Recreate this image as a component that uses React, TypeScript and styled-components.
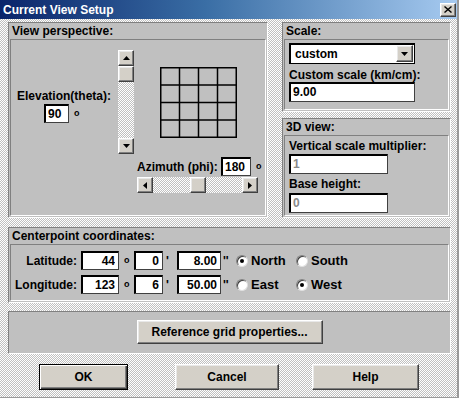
import * as React from 'react';
import styled, { createGlobalStyle, css } from 'styled-components';

const GlobalStyle = createGlobalStyle`
	html, body {
		margin: 0;
		padding: 0;
		background: #fff;
	}
	body {
		font-family: "Liberation Sans", Arial, sans-serif;
		font-size: 12px;
		font-weight: bold;
		color: #000;
	}
`;

const dither = css`
	background-color: #fff;
	background-image: repeating-conic-gradient(#c0c0c0 0 25%, #ffffff 0 50%);
	background-size: 2px 2px;
`;

const raised = css`
	background: #d4d0c8;
	border: 1px solid;
	border-color: #fff #404040 #404040 #fff;
	box-shadow: inset -1px -1px #808080, inset 1px 1px #e8e8e8;
`;

const sunken = css`
	border: 1px solid;
	border-color: #808080 #fff #fff #808080;
`;

const Window = styled.div`
	width: 459px;
	height: 398px;
	box-sizing: border-box;
	border-right: 2px solid #9a9a9a;
	border-bottom: 1px solid #9a9a9a;
	display: flex;
	flex-direction: column;
	${dither};
`;

const TitleBar = styled.div`
	height: 19px;
	flex: none;
	display: flex;
	align-items: center;
	justify-content: space-between;
	padding: 0 1px 0 3px;
	background: linear-gradient(90deg, #0a246a 0%, #3a6ea5 45%, #a6caf0 100%);
	color: #fff;
	font-size: 12px;
`;

const CloseButton = styled.div`
	width: 16px;
	height: 14px;
	box-sizing: border-box;
	display: flex;
	align-items: center;
	justify-content: center;
	${raised};
`;

const Body = styled.div`
	flex: 1;
	padding: 3px 6px 0 8px;
	display: flex;
	flex-direction: column;
`;

const TopRow = styled.div`
	display: flex;
	gap: 14px;
	height: 196px;
`;

const RightColumn = styled.div`
	width: 169px;
	display: flex;
	flex-direction: column;
	gap: 6px;
`;

const Panel = styled.section<{ $w?: number; $h?: number; $grow?: boolean }>`
	box-sizing: border-box;
	width: ${p => (p.$w ? `${p.$w}px` : 'auto')};
	height: ${p => (p.$h ? `${p.$h}px` : 'auto')};
	flex: ${p => (p.$grow ? 1 : 'none')};
	background: #c0c0c0;
	display: flex;
	flex-direction: column;
	${sunken};
`;

const PanelHeader = styled.div`
	height: 16px;
	line-height: 16px;
	padding-left: 3px;
	flex: none;
`;

const PanelBody = styled.div`
	flex: 1;
	margin: 0 1px 1px;
	display: flex;
	${sunken};
`;

const StackBody = styled(PanelBody)`
	flex-direction: column;
	padding-left: 4px;
`;

const Label = styled.div<{ $mt?: number }>`
	line-height: 14px;
	height: 14px;
	margin-top: ${p => p.$mt || 0}px;
	white-space: nowrap;
`;

const Field = styled.input<{ $w: number; $h?: number; $align?: string; $mt?: number; $dim?: boolean }>`
	box-sizing: border-box;
	width: ${p => p.$w}px;
	height: ${p => p.$h || 19}px;
	margin: ${p => p.$mt || 0}px 0 0 0;
	padding: 0 3px;
	border: 1px solid #000;
	border-right-color: #404040;
	border-bottom-color: #404040;
	box-shadow: inset 1px 1px #000;
	background: #fff;
	font-family: "Liberation Sans", Arial, sans-serif;
	font-size: 12px;
	font-weight: bold;
	color: ${p => (p.$dim ? '#8a8a8a' : '#000')};
	text-align: ${p => p.$align || 'left'};
	outline: none;
`;

const Unit = styled.span<{ $pl?: number; $small?: boolean }>`
	padding-left: ${p => p.$pl || 0}px;
	font-size: ${p => (p.$small ? 9 : 12)}px;
	line-height: 1;
	align-self: center;
`;

/* view perspective */

const LeftCol = styled.div`
	width: 107px;
	padding: 49px 0 0 6px;
	box-sizing: border-box;
	display: flex;
	flex-direction: column;
`;

const InlineRow = styled.div<{ $ml?: number; $mt?: number }>`
	display: flex;
	align-items: center;
	margin-left: ${p => p.$ml || 0}px;
	margin-top: ${p => p.$mt || 0}px;
`;

const VScroll = styled.div`
	width: 16px;
	height: 104px;
	margin-top: 10px;
	display: flex;
	flex-direction: column;
	${dither};
`;

const HScroll = styled.div`
	width: 121px;
	height: 16px;
	margin: 1px 0 0 3px;
	display: flex;
	${dither};
`;

const ScrollBtn = styled.div`
	width: 16px;
	height: 16px;
	box-sizing: border-box;
	flex: none;
	display: flex;
	align-items: center;
	justify-content: center;
	${raised};
`;

const Track = styled.div<{ $size?: number }>`
	flex: ${p => (p.$size ? `0 0 ${p.$size}px` : 1)};
`;

const ViewArea = styled.div`
	padding-top: 27px;
	display: flex;
	flex-direction: column;
`;

const GridBox = styled.svg`
	margin-left: 26px;
	display: block;
`;

const FixedLabel = styled.span<{ $w: number }>`
	width: ${p => p.$w}px;
	white-space: nowrap;
`;

/* scale */

const Select = styled.div`
	box-sizing: border-box;
	width: 126px;
	height: 21px;
	margin-top: 3px;
	background: #fff;
	border: 1px solid #000;
	box-shadow: inset 1px 1px #000;
	display: flex;
	align-items: center;
	justify-content: space-between;
	padding: 0 1px 0 5px;
`;

const DropBtn = styled(ScrollBtn)`
	width: 17px;
	height: 17px;
`;

/* coordinates */

const CoordGrid = styled.div`
	display: grid;
	grid-template-columns: 70px 38px 15px 29px 14px 44px 15px 60px auto;
	grid-auto-rows: 19px;
	row-gap: 5px;
	padding-top: 6px;
	align-items: center;
`;

const RowLabel = styled.span`
	text-align: right;
	padding-right: 4px;
`;

const Radio = styled.label`
	display: flex;
	align-items: center;
	gap: 3px;
	font-size: 13px;
`;

const RadioDot = styled.span<{ $on?: boolean }>`
	width: 12px;
	height: 12px;
	box-sizing: border-box;
	border-radius: 50%;
	background: #fff;
	border: 1px solid;
	border-color: #808080 #e0e0e0 #e0e0e0 #808080;
	box-shadow: inset 1px 1px #404040;
	display: flex;
	align-items: center;
	justify-content: center;

	&::after {
		content: '';
		width: 4px;
		height: 4px;
		border-radius: 50%;
		background: #000;
		display: ${p => (p.$on ? 'block' : 'none')};
	}
`;

/* bottom */

const CenterBody = styled.div`
	flex: 1;
	display: flex;
	justify-content: center;
	padding-top: 8px;
`;

const Button = styled.button<{ $w: number; $ml?: number; $default?: boolean }>`
	box-sizing: border-box;
	width: ${p => p.$w}px;
	height: ${p => (p.$default ? 26 : 26)}px;
	margin-left: ${p => p.$ml || 0}px;
	padding: 0;
	font-family: "Liberation Sans", Arial, sans-serif;
	font-size: 12px;
	font-weight: bold;
	color: #000;
	${raised};
	${p =>
		p.$default &&
		css`
			border: 1px solid #000;
			box-shadow: inset 1px 1px #fff, inset -1px -1px #404040, inset -2px -2px #808080;
		`}
`;

const ButtonRow = styled.div`
	display: flex;
	margin-top: 10px;
`;

const Arrow: React.FC<{ dir: 'up' | 'down' | 'left' | 'right' }> = ({ dir }) => {
	const pts = {
		up: '0,4 7,4 3.5,0',
		down: '0,0 7,0 3.5,4',
		left: '4,0 4,7 0,3.5',
		right: '0,0 0,7 4,3.5',
	}[dir];
	const vertical = dir === 'up' || dir === 'down';
	return (
		<svg width={vertical ? 7 : 4} height={vertical ? 4 : 7} viewBox={vertical ? '0 0 7 4' : '0 0 4 7'}>
			<polygon points={pts} fill="#000" />
		</svg>
	);
};

const ViewGrid = () => {
	const xs = [0.75, 19.5, 38.5, 57.5, 76.25];
	const ys = [0.75, 18, 35.5, 53, 70.25];
	return (
		<GridBox width={77} height={71}>
			{xs.map(x => (
				<line key={'x' + x} x1={x} y1={0} x2={x} y2={71} stroke="#000" strokeWidth={1.5} />
			))}
			{ys.map(y => (
				<line key={'y' + y} x1={0} y1={y} x2={77} y2={y} stroke="#000" strokeWidth={1.5} />
			))}
		</GridBox>
	);
};

export default function App() {
	return (
		<>
			<GlobalStyle />
			<Window>
				<TitleBar>
					<span>Current View Setup</span>
					<CloseButton>
						<svg width="8" height="7" viewBox="0 0 8 7">
							<path d="M0.5 0.5 L7.5 6.5 M7.5 0.5 L0.5 6.5" stroke="#000" strokeWidth="1.4" />
						</svg>
					</CloseButton>
				</TitleBar>
				<Body>
					<TopRow>
						<Panel $w={260} $h={196}>
							<PanelHeader>View perspective:</PanelHeader>
							<PanelBody>
								<LeftCol>
									<Label>Elevation(theta):</Label>
									<InlineRow $ml={27} $mt={1}>
										<Field $w={25} value="90" readOnly />
										<Unit $pl={5} $small>o</Unit>
									</InlineRow>
								</LeftCol>
								<VScroll>
									<ScrollBtn><Arrow dir="up" /></ScrollBtn>
									<ScrollBtn />
									<Track />
									<ScrollBtn><Arrow dir="down" /></ScrollBtn>
								</VScroll>
								<ViewArea>
									<ViewGrid />
									<InlineRow $ml={3} $mt={19}>
										<FixedLabel $w={84}>Azimuth (phi):</FixedLabel>
										<Field $w={30} value="180" readOnly />
										<Unit $pl={5} $small>o</Unit>
									</InlineRow>
									<HScroll>
										<ScrollBtn><Arrow dir="left" /></ScrollBtn>
										<Track $size={37} />
										<ScrollBtn />
										<Track />
										<ScrollBtn><Arrow dir="right" /></ScrollBtn>
									</HScroll>
								</ViewArea>
							</PanelBody>
						</Panel>
						<RightColumn>
							<Panel $h={90}>
								<PanelHeader>Scale:</PanelHeader>
								<StackBody>
									<Select>
										<span>custom</span>
										<DropBtn><Arrow dir="down" /></DropBtn>
									</Select>
									<Label $mt={4}>Custom scale (km/cm):</Label>
									<Field $w={126} $h={20} value="9.00" readOnly />
								</StackBody>
							</Panel>
							<Panel $grow>
								<PanelHeader>3D view:</PanelHeader>
								<StackBody>
									<Label $mt={3}>Vertical scale multiplier:</Label>
									<Field $w={99} $h={20} $mt={1} $dim value="1" readOnly />
									<Label $mt={3}>Base height:</Label>
									<Field $w={99} $h={20} $mt={2} $dim value="0" readOnly />
								</StackBody>
							</Panel>
						</RightColumn>
					</TopRow>
					<Panel $h={76} style={{ marginTop: 9 }}>
						<PanelHeader>Centerpoint coordinates:</PanelHeader>
						<PanelBody>
							<CoordGrid>
								<RowLabel>Latitude:</RowLabel>
								<Field $w={38} $align="right" value="44" readOnly />
								<Unit $pl={5} $small>o</Unit>
								<Field $w={29} $align="right" value="0" readOnly />
								<Unit $pl={3}>'</Unit>
								<Field $w={44} $align="right" value="8.00" readOnly />
								<Unit $pl={2}>''</Unit>
								<Radio><RadioDot $on />North</Radio>
								<Radio><RadioDot />South</Radio>

								<RowLabel>Longitude:</RowLabel>
								<Field $w={38} $align="right" value="123" readOnly />
								<Unit $pl={5} $small>o</Unit>
								<Field $w={29} $align="right" value="6" readOnly />
								<Unit $pl={3}>'</Unit>
								<Field $w={44} $align="right" value="50.00" readOnly />
								<Unit $pl={2}>''</Unit>
								<Radio><RadioDot />East</Radio>
								<Radio><RadioDot $on />West</Radio>
							</CoordGrid>
						</PanelBody>
					</Panel>
					<Panel $h={43} style={{ marginTop: 8 }}>
						<CenterBody>
							<Button $w={186} style={{ height: 24 }}>Reference grid properties...</Button>
						</CenterBody>
					</Panel>
					<ButtonRow>
						<Button $w={89} $ml={31} $default>OK</Button>
						<Button $w={104} $ml={47}>Cancel</Button>
						<Button $w={107} $ml={33}>Help</Button>
					</ButtonRow>
				</Body>
			</Window>
		</>
	);
}
